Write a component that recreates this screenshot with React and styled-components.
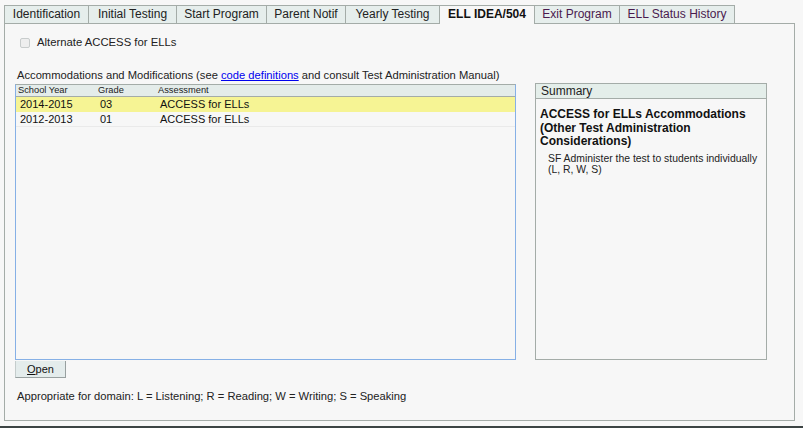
import React from 'react';
import styled, { createGlobalStyle } from 'styled-components';

const GlobalStyle = createGlobalStyle`
  html, body {
    margin: 0;
    padding: 0;
    background: #f7f7f7;
  }
  body {
    font-family: "Liberation Sans", Arial, sans-serif;
    color: #222;
  }
`;

const Page = styled.div`
  width: 803px;
  height: 428px;
  display: flex;
  flex-direction: column;
  box-sizing: border-box;
  padding: 5px 0 0 4px;
  overflow: hidden;
`;

const TabStrip = styled.div`
  display: flex;
  height: 18px;
`;

const Tab = styled.div`
  box-sizing: border-box;
  width: ${(p) => p.$width}px;
  height: ${(p) => (p.$active ? '19px' : '18px')};
  padding: 0 0 1px;
  margin-right: -1px;
  border: 1px solid #a4aca8;
  border-bottom: none;
  background: ${(p) => (p.$active ? '#f7f7f7' : '#e6eeec')};
  font-size: 12px;
  line-height: 16px;
  text-align: center;
  font-weight: ${(p) => (p.$active ? 700 : 400)};
  color: ${(p) => (p.$active ? '#111' : p.$visited ? '#4a1a4e' : '#222')};
  white-space: nowrap;
  position: relative;
  z-index: ${(p) => (p.$active ? 2 : 1)};
`;

const Panel = styled.div`
  box-sizing: border-box;
  width: 791px;
  height: 398px;
  border: 1px solid #a4aca8;
  background: #f7f7f7;
  padding: 0 0 0 10px;
  display: flex;
  flex-direction: column;
`;

const CheckRow = styled.label`
  display: flex;
  align-items: center;
  gap: 7px;
  margin: 11px 0 0 5px;
  font-size: 11.3px;
  line-height: 14px;
  height: 14px;
`;

const CheckBox = styled.span`
  box-sizing: border-box;
  width: 10px;
  height: 10px;
  margin-top: 1px;
  border: 1px solid #c8cccc;
  border-radius: 2px;
  background: #eeeeee;
`;

const Main = styled.div`
  display: flex;
  gap: 19px;
  margin-top: 19px;
`;

const LeftCol = styled.div`
  width: 501px;
  display: flex;
  flex-direction: column;
`;

const Caption = styled.div`
  font-size: 11.2px;
  line-height: 14px;
  margin: 0 0 2px 2px;
  white-space: nowrap;

  a {
    color: #0000ee;
    text-decoration: underline;
  }
`;

const ListBox = styled.div`
  box-sizing: border-box;
  height: 276px;
  border: 1px solid #86b0e6;
  border-top-color: #a4aca8;
  background: #f7f7f7;
`;

const ListHead = styled.div`
  display: grid;
  grid-template-columns: 80px 60px 1fr;
  height: 11px;
  padding-left: 2px;
  background: #e4ecea;
  border-bottom: 1px solid #a4aca8;
  font-size: 9.3px;
  line-height: 11px;
  color: #222;
`;

const ListRow = styled.div`
  display: grid;
  grid-template-columns: 80px 60px 1fr;
  box-sizing: border-box;
  height: 15px;
  padding-left: 4px;
  background: ${(p) => (p.$selected ? '#f6f494' : '#f7f7f7')};
  border-bottom: 1px solid ${(p) => (p.$selected ? '#f6f494' : '#eaeaea')};
  font-size: 11px;
  line-height: 14px;
  color: #111;
`;

const OpenButton = styled.button`
  box-sizing: border-box;
  width: 51px;
  height: 17px;
  margin-top: 1px;
  padding: 0;
  border: 1px solid #c4cccc;
  border-top: none;
  border-right-color: #98a0a0;
  border-bottom-color: #98a0a0;
  background: #e4ecec;
  font-family: "Liberation Sans", Arial, sans-serif;
  font-size: 11px;
  color: #111;

  u {
    text-decoration: underline;
  }
`;

const Note = styled.div`
  margin: 11px 0 0 2px;
  font-size: 11.2px;
  line-height: 14px;
  white-space: nowrap;
`;

const Summary = styled.div`
  box-sizing: border-box;
  width: 232px;
  height: 277px;
  margin-top: 15px;
  border: 1px solid #a4aca8;
  background: #f7f7f7;
`;

const SummaryHead = styled.div`
  height: 14px;
  padding-left: 5px;
  background: #e4eeea;
  border-bottom: 1px solid #a4aca8;
  font-size: 12px;
  line-height: 14px;
`;

const SummaryTitle = styled.div`
  margin-top: 9px;
  padding: 0 6px 0 4px;
  font-size: 12px;
  font-weight: 700;
  line-height: 13.5px;
  color: #111;
`;

const SummaryText = styled.div`
  margin-top: 4px;
  padding: 0 4px 0 12px;
  font-size: 10.4px;
  line-height: 11px;
  color: #222;
`;

const BottomBar = styled.div`
  height: 2px;
  margin: 5px 0 0 -4px;
  background: #3c4444;
`;

const tabs = [
  { label: 'Identification', width: 85 },
  { label: 'Initial Testing', width: 89 },
  { label: 'Start Program', width: 91 },
  { label: 'Parent Notif', width: 80 },
  { label: 'Yearly Testing', width: 95 },
  { label: 'ELL IDEA/504', width: 96, active: true },
  { label: 'Exit Program', width: 86, visited: true },
  { label: 'ELL Status History', width: 116, visited: true },
];

const rows = [
  { year: '2014-2015', grade: '03', test: 'ACCESS for ELLs', selected: true },
  { year: '2012-2013', grade: '01', test: 'ACCESS for ELLs' },
];

const App = () => {
  return (
    <Page>
      <GlobalStyle />
      <TabStrip>
        {tabs.map((t) => (
          <Tab key={t.label} $width={t.width} $active={t.active} $visited={t.visited}>
            {t.label}
          </Tab>
        ))}
      </TabStrip>
      <Panel>
        <CheckRow>
          <CheckBox />
          Alternate ACCESS for ELLs
        </CheckRow>
        <Main>
          <LeftCol>
            <Caption>
              Accommodations and Modifications (see <a href="#defs">code definitions</a> and consult Test Administration Manual)
            </Caption>
            <ListBox>
              <ListHead>
                <span>School Year</span>
                <span>Grade</span>
                <span>Assessment</span>
              </ListHead>
              {rows.map((r) => (
                <ListRow key={r.year} $selected={r.selected}>
                  <span>{r.year}</span>
                  <span>{r.grade}</span>
                  <span>{r.test}</span>
                </ListRow>
              ))}
            </ListBox>
            <OpenButton>
              <u>O</u>pen
            </OpenButton>
            <Note>Appropriate for domain: L = Listening; R = Reading; W = Writing; S = Speaking</Note>
          </LeftCol>
          <Summary>
            <SummaryHead>Summary</SummaryHead>
            <SummaryTitle>ACCESS for ELLs Accommodations (Other Test Administration Considerations)</SummaryTitle>
            <SummaryText>SF Administer the test to students individually (L, R, W, S)</SummaryText>
          </Summary>
        </Main>
      </Panel>
      <BottomBar />
    </Page>
  );
};

export default App;
